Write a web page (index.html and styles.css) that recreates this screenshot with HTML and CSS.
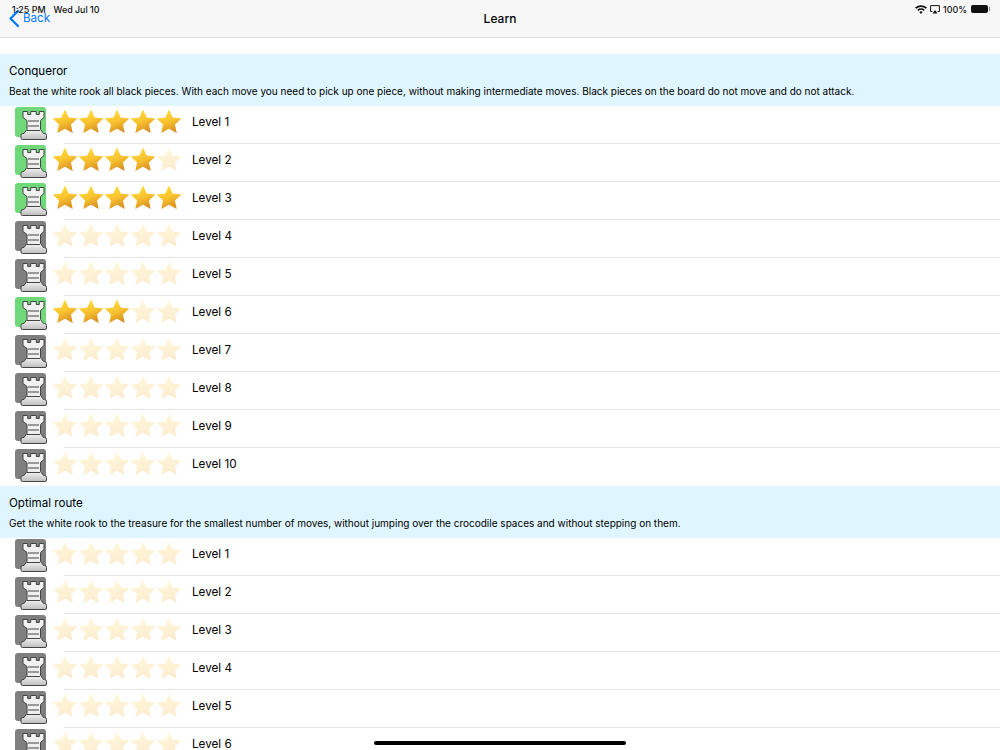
FILE: index.html
```html
<!DOCTYPE html>
<html lang="en">
<head>
<meta charset="utf-8">
<title>Learn</title>
<link rel="stylesheet" href="styles.css">
</head>
<body>
<svg class="defs" width="0" height="0" aria-hidden="true">
  <defs>
    <linearGradient id="gold" x1="0.3" y1="0" x2="0.7" y2="1">
      <stop offset="0" stop-color="#ffe03e"/>
      <stop offset="0.5" stop-color="#f9c22f"/>
      <stop offset="1" stop-color="#d58a20"/>
    </linearGradient>
    <linearGradient id="pale" x1="0.3" y1="0" x2="0.7" y2="1">
      <stop offset="0" stop-color="#fff8da"/>
      <stop offset="1" stop-color="#fcebd0"/>
    </linearGradient>
    <linearGradient id="stone" x1="0" y1="0" x2="0" y2="1">
      <stop offset="0" stop-color="#f2f2f2"/>
      <stop offset="0.7" stop-color="#ededed"/>
      <stop offset="1" stop-color="#bdbdbd"/>
    </linearGradient>
    <symbol id="star" viewBox="0 0 26 25">
      <path d="M13 .6l3.700 7.900 8.700 1.100-6.400 5.800 1.700 8.500L13 19.700l-7.700 4.200 1.700-8.500L.6 9.600l8.700-1.100z" stroke-linejoin="round"/>
    </symbol>
    <symbol id="rook" viewBox="0 0 33 33">
      <path d="M8 4.500h4.700v3h3v-3h5.600v3h3v-3H29v6l-3.500 3v9l3 4h1q2 0 2 2v2.500q0 1.500-1.500 1.500H7.500Q6 32.500 6 31v-2.500q0-2 2-2h1l3-4v-9l-4-3z" fill="url(#stone)" stroke="#444" stroke-width="1" stroke-linejoin="round"/>
      <path d="M13 14h11M13 19h11M12 23.500h13" fill="none" stroke="#444" stroke-width="1.200"/>
    </symbol>
  </defs>
</svg>

<header class="nav">
  <a class="back">
    <svg class="chevron" width="12" height="19" viewBox="0 0 12 19"><path d="M10 2L2.500 9.500 10 17" fill="none" stroke="#007aff" stroke-width="2.300" stroke-linecap="round" stroke-linejoin="round"/></svg>
    <span>Back</span>
  </a>
  <h1 class="title">Learn</h1>
</header>
<div class="status">
  <div class="status-left"><span>1:25 PM</span><span>Wed Jul 10</span></div>
  <div class="status-right">
    <svg width="12" height="9" viewBox="0 0 12 9"><path d="M6 9L4.300 7a2.500 2.500 0 0 1 3.400 0zM3.300 6L2.200 4.800a5.600 5.600 0 0 1 7.600 0L8.700 6a4 4 0 0 0-5.400 0zM1.200 3.800L0 2.500a8.800 8.800 0 0 1 12 0l-1.200 1.300a7.200 7.200 0 0 0-9.600 0z" fill="#111"/></svg>
    <svg width="10" height="9" viewBox="0 0 10 9"><path d="M2.500 6.500H.6V.6h8.800v5.900H7.500" fill="none" stroke="#111" stroke-width="1"/><path d="M5 5l2.500 3.500h-5z" fill="#111"/></svg>
    <span class="pct">100%</span>
    <span class="battery"></span>
  </div>
</div>

<main class="content">
  <section class="section">
    <div class="section-head">
      <h2>Conqueror</h2>
      <p>Beat the white rook all black pieces. With each move you need to pick up one piece, without making intermediate moves. Black pieces on the board do not move and do not attack.</p>
    </div>
    <ul class="rows" id="conqueror"></ul>
  </section>
  <section class="section">
    <div class="section-head">
      <h2>Optimal route</h2>
      <p>Get the white rook to the treasure for the smallest number of moves, without jumping over the crocodile spaces and without stepping on them.</p>
    </div>
    <ul class="rows" id="route"></ul>
  </section>
</main>
<div class="home-bar"></div>
<script src="app.js"></script>
</body>
</html>
```

FILE: app.js
```js
function fill(id, scores) {
  var html = scores.map(function (score, i) {
    var stars = '';
    for (var s = 0; s < 5; s++) {
      stars += '<svg class="star ' + (s < score ? 'on' : 'off') + '"><use href="#star"/></svg>';
    }
    return '<li class="row"><span class="badge ' + (score > 0 ? 'done' : '') + '">' +
      '<svg class="rook"><use href="#rook"/></svg></span>' +
      '<span class="stars">' + stars + '</span>' +
      '<span class="label">Level ' + (i + 1) + '</span></li>';
  }).join('');
  document.getElementById(id).innerHTML = html;
}
fill('conqueror', [5, 4, 5, 0, 0, 3, 0, 0, 0, 0]);
fill('route', [0, 0, 0, 0, 0, 0]);
```

FILE: styles.css
```css
* { box-sizing: border-box; }
html, body { margin: 0; height: 750px; overflow: hidden; background: #fff; }
body { font-family: Inter, "Liberation Sans", Arial, sans-serif; color: #000; position: relative; }
.defs { position: absolute; }

.nav {
  height: 38px;
  background: #f7f7f7;
  border-bottom: 1px solid #dedede;
  display: flex;
  align-items: flex-start;
  justify-content: center;
  position: relative;
}
.title { margin: 11px 0 0; font-size: 12px; line-height: 16px; font-weight: 500; }
.back {
  position: absolute;
  left: 8px;
  top: 9px;
  display: flex;
  align-items: center;
  gap: 3px;
  color: #007aff;
  font-size: 11.600px;
  line-height: 19px;
}
.status {
  position: absolute;
  left: 0; right: 0; top: 0;
  height: 18px;
  display: flex;
  justify-content: space-between;
  align-items: center;
  padding: 0 12px 0 12px;
  font-size: 8.900px;
  font-weight: 500;
  color: #111;
}
.status-left { display: flex; gap: 8px; }
.status-right { display: flex; align-items: center; gap: 3px; }
.battery { width: 17px; height: 8px; background: #111; border-radius: 2px; display: block; margin-left: 1px; position: relative; }
.battery::after { content: ""; position: absolute; right: -2px; top: 2px; width: 1px; height: 4px; background: #888; }

.content { padding-top: 16px; }
.section-head {
  height: 52px;
  background: #dff5ff;
  padding: 9px 9px 0;
}
.section-head h2 { margin: 0; font-size: 11.600px; line-height: 16px; font-weight: 400; }
.section-head p { margin: 5px 0 0; font-size: 10px; line-height: 14px; white-space: nowrap; }

.rows { list-style: none; margin: 0; padding: 0; }
.row {
  height: 38px;
  display: flex;
  align-items: flex-start;
  position: relative;
  padding-left: 15px;
}
.row::after {
  content: "";
  position: absolute;
  left: 64px; right: 0; bottom: 0;
  height: 1px;
  background: #e4e4e4;
}
.row:last-child::after { display: none; }
.badge {
  width: 31px;
  height: 30px;
  margin-top: 1px;
  background: #7f7f7f;
  border-radius: 3px;
  position: relative;
  flex: none;
}
.badge.done { background: #6fd97a; }
.rook { position: absolute; left: 0; top: 0; width: 33px; height: 33px; }
.stars { display: flex; margin-left: 6px; margin-top: 3px; flex: none; }
.star { width: 26px; height: 25px; display: block; }
.star.on { fill: url(#gold); }
.star.off { fill: url(#pale); }
.label { margin-left: 10px; margin-top: 8px; font-size: 11.700px; line-height: 16px; }

.home-bar {
  position: absolute;
  left: 374px;
  bottom: 5px;
  width: 252px;
  height: 4px;
  border-radius: 2px;
  background: #000;
}
```
